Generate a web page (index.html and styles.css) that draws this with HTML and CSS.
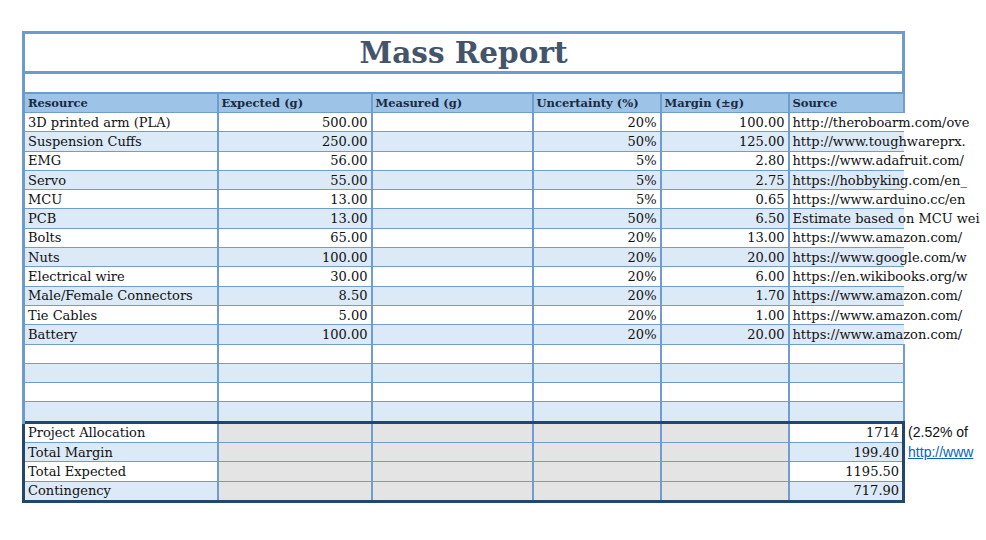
FILE: index.html
```html
<!DOCTYPE html>
<html>
<head>
<meta charset="utf-8">
<link rel="stylesheet" href="styles.css">
</head>
<body>
<table class="sheet">
  <colgroup>
    <col class="c1"><col class="c2"><col class="c3"><col class="c4"><col class="c5"><col class="c6"><col class="c7">
  </colgroup>
  <tr class="title-row"><td colspan="6" class="title">Mass Report</td><td class="out"></td></tr>
  <tr class="blank-row"><td colspan="6" class="blank"></td><td class="out"></td></tr>
  <tr class="head"><td>Resource</td><td>Expected (g)</td><td>Measured (g)</td><td>Uncertainty (%)</td><td>Margin (±g)</td><td>Source</td><td class="out"></td></tr>
  <tr class="r w"><td>3D printed arm (PLA)</td><td class="n">500.00</td><td></td><td class="n">20%</td><td class="n">100.00</td><td class="src">http://theroboarm.com/ove</td><td class="out"></td></tr>
  <tr class="r b"><td>Suspension Cuffs</td><td class="n">250.00</td><td></td><td class="n">50%</td><td class="n">125.00</td><td class="src">http://www.toughwareprx.</td><td class="out"></td></tr>
  <tr class="r w"><td>EMG</td><td class="n">56.00</td><td></td><td class="n">5%</td><td class="n">2.80</td><td class="src">https://www.adafruit.com/</td><td class="out"></td></tr>
  <tr class="r b"><td>Servo</td><td class="n">55.00</td><td></td><td class="n">5%</td><td class="n">2.75</td><td class="src">https://hobbyking.com/en_</td><td class="out"></td></tr>
  <tr class="r w"><td>MCU</td><td class="n">13.00</td><td></td><td class="n">5%</td><td class="n">0.65</td><td class="src">https://www.arduino.cc/en</td><td class="out"></td></tr>
  <tr class="r b"><td>PCB</td><td class="n">13.00</td><td></td><td class="n">50%</td><td class="n">6.50</td><td class="src">Estimate based on MCU wei</td><td class="out"></td></tr>
  <tr class="r w"><td>Bolts</td><td class="n">65.00</td><td></td><td class="n">20%</td><td class="n">13.00</td><td class="src">https://www.amazon.com/</td><td class="out"></td></tr>
  <tr class="r b"><td>Nuts</td><td class="n">100.00</td><td></td><td class="n">20%</td><td class="n">20.00</td><td class="src">https://www.google.com/w</td><td class="out"></td></tr>
  <tr class="r w"><td>Electrical wire</td><td class="n">30.00</td><td></td><td class="n">20%</td><td class="n">6.00</td><td class="src">https://en.wikibooks.org/w</td><td class="out"></td></tr>
  <tr class="r b"><td>Male/Female Connectors</td><td class="n">8.50</td><td></td><td class="n">20%</td><td class="n">1.70</td><td class="src">https://www.amazon.com/</td><td class="out"></td></tr>
  <tr class="r w"><td>Tie Cables</td><td class="n">5.00</td><td></td><td class="n">20%</td><td class="n">1.00</td><td class="src">https://www.amazon.com/</td><td class="out"></td></tr>
  <tr class="r b"><td>Battery</td><td class="n">100.00</td><td></td><td class="n">20%</td><td class="n">20.00</td><td class="src">https://www.amazon.com/</td><td class="out"></td></tr>
  <tr class="r w e"><td></td><td></td><td></td><td></td><td></td><td></td><td class="out"></td></tr>
  <tr class="r b e"><td></td><td></td><td></td><td></td><td></td><td></td><td class="out"></td></tr>
  <tr class="r w e"><td></td><td></td><td></td><td></td><td></td><td></td><td class="out"></td></tr>
  <tr class="r b e"><td></td><td></td><td></td><td></td><td></td><td></td><td class="out"></td></tr>
  <tr class="r w t t1"><td>Project Allocation</td><td class="g"></td><td class="g"></td><td class="g"></td><td class="g"></td><td class="n">1714</td><td class="out note">(2.52% of</td></tr>
  <tr class="r b t"><td>Total Margin</td><td class="g"></td><td class="g"></td><td class="g"></td><td class="g"></td><td class="n">199.40</td><td class="out note"><a class="link" href="#">http://www</a></td></tr>
  <tr class="r w t"><td>Total Expected</td><td class="g"></td><td class="g"></td><td class="g"></td><td class="g"></td><td class="n">1195.50</td><td class="out"></td></tr>
  <tr class="r b t t4"><td>Contingency</td><td class="g"></td><td class="g"></td><td class="g"></td><td class="g"></td><td class="n">717.90</td><td class="out"></td></tr>
</table>
</body>
</html>
```

FILE: styles.css
```css
html, body {
  margin: 0;
  padding: 0;
  background: #ffffff;
  overflow: hidden;
}

.sheet {
  margin: 31px 0 0 22px;
  border-collapse: collapse;
  table-layout: fixed;
  width: 964px;
  font-family: "DejaVu Serif", serif;
  font-size: 13px;
  color: #111;
}

.c1 { width: 194px; }
.c2 { width: 154px; }
.c3 { width: 161px; }
.c4 { width: 128px; }
.c5 { width: 128px; }
.c6 { width: 115px; }
.c7 { width: 84px; }

.sheet td {
  padding: 0 3px;
  white-space: nowrap;
  overflow: visible;
  border-left: 2px solid #6f9dd0;
  border-right: 2px solid #6f9dd0;
  border-top: 1px solid #6f9dd0;
  border-bottom: 1px solid #6f9dd0;
}

.sheet td.out {
  border: none;
  background: transparent;
  padding: 0 0 0 3px;
}

.title-row td.title {
  height: 37px;
  border: 3px solid #6d9bce;
  text-align: center;
  font-family: "DejaVu Serif", serif;
  font-weight: bold;
  font-size: 29.5px;
  color: #44546a;
  line-height: 37px;
}

.blank-row td.blank {
  height: 18px;
  border-left: 3px solid #6d9bce;
  border-right: 3px solid #6d9bce;
  border-bottom: 2px solid #6d9bce;
  border-top: 3px solid #6d9bce;
}

.head td {
  height: 18px;
  background: #9dc3e6;
  font-weight: bold;
  color: #1a2a44;
  font-size: 11.5px;
  line-height: 18px;
}

.head td:first-child,
.r td:first-child {
  border-left: 3px solid #6d9bce;
}

.r td {
  height: 18.3px;
  line-height: 17px;
}

.r.w td { background: #ffffff; }
.r.b td { background: #dce9f7; }

.r td.n { text-align: right; }

.r td.src {
  border-right: none;
  overflow: visible;
}

.r.e td:nth-child(6) {
  border-right: 2px solid #6f9dd0;
}

.r.t td:first-child { border-left: 3px solid #23466e; }
.r.t td:nth-child(6) { border-right: 3px solid #23466e; }
.r.t1 td:not(.out) { border-top: 3px solid #23466e; }
.r.t4 td:not(.out) { border-bottom: 3px solid #23466e; }

.r.t td.g { background: #e4e4e4; }

.r td.out { background: transparent; }

.note {
  font-family: "Liberation Sans", Arial, sans-serif;
  font-size: 14px;
  color: #111;
}

.link {
  color: #0563c1;
  text-decoration: underline;
}
```
